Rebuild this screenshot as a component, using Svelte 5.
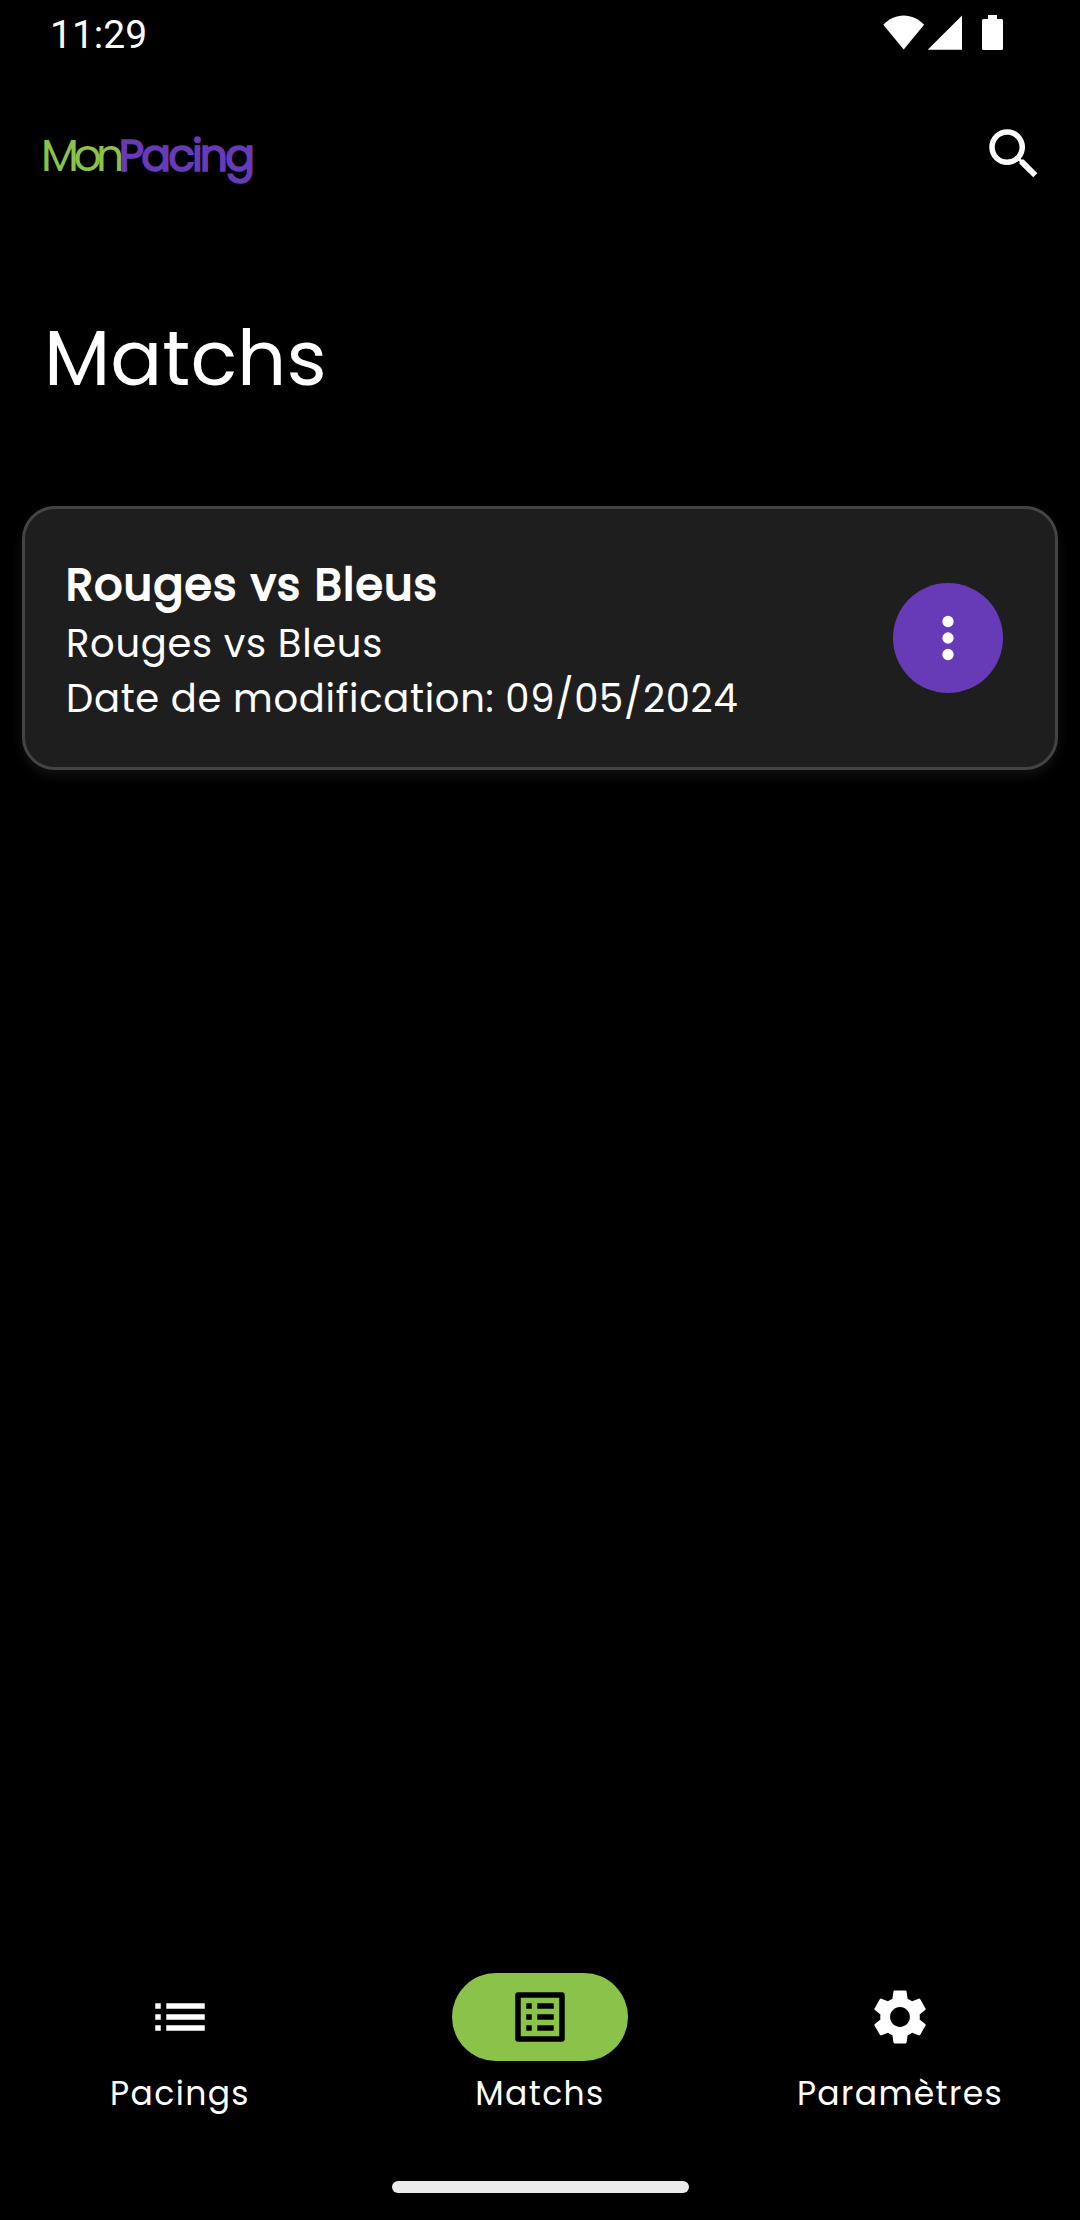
<script>
  const matches = [
    { title: 'Rouges vs Bleus', teams: 'Rouges vs Bleus', modified: '09/05/2024' },
  ];

  const tabs = [
    {
      label: 'Pacings',
      icon: 'M3 13h2v-2H3v2zm0 4h2v-2H3v2zm0-8h2V7H3v2zm4 4h14v-2H7v2zm0 4h14v-2H7v2zM7 7v2h14V7H7z',
    },
    {
      label: 'Matchs',
      active: true,
      icon: 'M19 5v14H5V5h14m1.1-2H3.9c-.5 0-.9.4-.9.9v16.2c0 .4.4.9.9.9h16.2c.4 0 .9-.5.9-.9V3.9c0-.5-.5-.9-.9-.9zM11 7h6v2h-6V7zm0 4h6v2h-6v-2zm0 4h6v2h-6v-2zM7 7h2v2H7V7zm0 4h2v2H7v-2zm0 4h2v2H7v-2z',
    },
    {
      label: 'Paramètres',
      icon: 'M19.14 12.94c.04-.3.06-.61.06-.94 0-.32-.02-.64-.07-.94l2.03-1.58a.49.49 0 0 0 .12-.61l-1.92-3.32a.488.488 0 0 0-.59-.22l-2.39.96c-.5-.38-1.03-.7-1.62-.94l-.36-2.54a.484.484 0 0 0-.48-.41h-3.84c-.24 0-.43.17-.47.41l-.36 2.54c-.59.24-1.13.57-1.62.94l-2.39-.96c-.22-.08-.47 0-.59.22L2.74 8.87c-.12.21-.08.47.12.61l2.03 1.58c-.05.3-.07.63-.07.94s.02.64.07.94l-2.03 1.58a.49.49 0 0 0-.12.61l1.92 3.32c.12.22.37.29.59.22l2.39-.96c.5.38 1.03.7 1.62.94l.36 2.54c.05.24.24.41.48.41h3.84c.24 0 .44-.17.47-.41l.36-2.54c.59-.24 1.13-.56 1.62-.94l2.39.96c.22.08.47 0 .59-.22l1.92-3.32c.12-.22.07-.47-.12-.61l-2.03-1.58zM12 15.6c-1.98 0-3.6-1.62-3.6-3.6s1.62-3.6 3.6-3.6 3.6 1.62 3.6 3.6-1.62 3.6-3.6 3.6z',
    },
  ];
</script>

<div class="screen">
  <div class="status">
    <span class="clock">11:29</span>
    <svg class="signals" width="121" height="36" viewBox="0 0 121 36">
      <path d="M0.3 9.7C5.5 4 13 .4 20.7.4S35.9 4 41.1 9.7L20.7 34.5z" />
      <path d="M44.7 34.7L79 0.5V34.7z" />
      <path d="M105 0h9v4h4.5q1.5 0 1.5 1.5v28q0 1.5-1.5 1.5h-18q-1.5 0-1.5-1.5v-28q0-1.5 1.5-1.5h4.5z" transform="matrix(1 0 0 1.13 0 0)" />
    </svg>
  </div>

  <header>
    <div class="logo"><span class="mon">Mon</span><span class="pacing">Pacing</span></div>
    <svg class="icon" viewBox="0 0 24 24">
      <path d="M15.5 14h-.79l-.28-.27A6.471 6.471 0 0 0 16 9.5 6.5 6.5 0 1 0 9.5 16c1.61 0 3.09-.59 4.23-1.57l.27.28v.79l5 4.99L20.49 19l-4.99-5zm-6 0C7.01 14 5 11.99 5 9.5S7.01 5 9.5 5 14 7.01 14 9.5 11.99 14 9.5 14z" />
    </svg>
  </header>

  <h1>Matchs</h1>

  <main>
    {#each matches as match}
      <article>
        <div class="info">
          <h2>{match.title}</h2>
          <p>{match.teams}</p>
          <p>Date de modification: {match.modified}</p>
        </div>
        <button aria-label="Options">
          <svg class="icon" viewBox="0 0 24 24">
            <circle cx="12" cy="6" r="2.05" />
            <circle cx="12" cy="12" r="2.05" />
            <circle cx="12" cy="18" r="2.05" />
          </svg>
        </button>
      </article>
    {/each}
  </main>

  <nav>
    {#each tabs as tab}
      <div class="tab" class:active={tab.active}>
        <div class="pill">
          <svg class="icon" viewBox="0 0 24 24"><path d={tab.icon} /></svg>
        </div>
        <span>{tab.label}</span>
      </div>
    {/each}
  </nav>

  <div class="gesture"><div class="handle"></div></div>
</div>

<style>
  :global(body) {
    background: #000;
  }
  .screen {
    box-sizing: border-box;
    width: 1080px;
    height: 2220px;
    display: flex;
    flex-direction: column;
    background: #000;
    color: #fff;
    font-family: Poppins, Inter, sans-serif;
    font-weight: 400;
    white-space: nowrap;
    overflow: hidden;
  }
  svg {
    display: block;
    fill: currentColor;
    flex: none;
  }
  .icon {
    width: 66px;
    height: 66px;
  }
  .status {
    height: 66px;
    box-sizing: border-box;
    padding: 0 76px 0 50px;
    display: flex;
    justify-content: space-between;
    align-items: center;
  }
  .signals path:last-child {
    transform: none;
  }
  .clock {
    font: 39px/46px Roboto, sans-serif;
    padding-top: 3px;
  }
  header {
    height: 176px;
    box-sizing: border-box;
    padding: 0 33px 0 41px;
    display: flex;
    justify-content: space-between;
    align-items: center;
  }
  .logo {
    font-size: 44px;
    line-height: 52px;
    padding-top: 3px;
  }
  .mon {
    color: #8bc34a;
    letter-spacing: -5.5px;
  }
  /* The regular weight is thickened with a stroke to keep its letter shapes. */
  .pacing {
    color: #673ab7;
    letter-spacing: -2.9px;
    -webkit-text-stroke: 1.6px currentColor;
  }
  h1 {
    margin: 0;
    padding: 66px 0 98px 44px;
    font-size: 77px;
    font-weight: 400;
    line-height: 100px;
  }
  main {
    flex: 1;
    padding: 0 22px;
  }
  article {
    box-sizing: border-box;
    height: 264px;
    padding: 0 52px 0 41px;
    border: 3px solid #444;
    border-radius: 33px;
    background: #1e1e1e;
    box-shadow: 0 5px 12px rgba(68, 68, 68, 0.28);
    display: flex;
    justify-content: space-between;
    align-items: center;
  }
  .info {
    padding-top: 4px;
  }
  h2,
  p {
    margin: 0;
  }
  h2 {
    font-size: 44px;
    font-weight: 400;
    line-height: 62px;
    letter-spacing: 1.45px;
    -webkit-text-stroke: 2px currentColor;
  }
  p {
    font-size: 38.5px;
    line-height: 55px;
    letter-spacing: 0.69px;
  }
  button {
    width: 110px;
    height: 110px;
    padding: 0;
    border: 0;
    border-radius: 50%;
    background: #673ab7;
    color: #fff;
    display: grid;
    place-items: center;
  }
  nav {
    display: grid;
    grid-template-columns: repeat(3, 1fr);
    height: 208px;
  }
  .tab {
    display: flex;
    flex-direction: column;
    align-items: center;
  }
  .tab span {
    font-size: 33px;
    line-height: 41px;
    padding-top: 12px;
    letter-spacing: 1.375px;
  }
  .pill {
    width: 176px;
    height: 88px;
    border-radius: 44px;
    display: grid;
    place-items: center;
  }
  .active .pill {
    background: #8bc34a;
    color: #000;
  }
  .gesture {
    height: 39px;
    display: flex;
    justify-content: center;
  }
  .handle {
    width: 297px;
    height: 12px;
    border-radius: 6px;
    background: #ebebeb;
  }
</style>
